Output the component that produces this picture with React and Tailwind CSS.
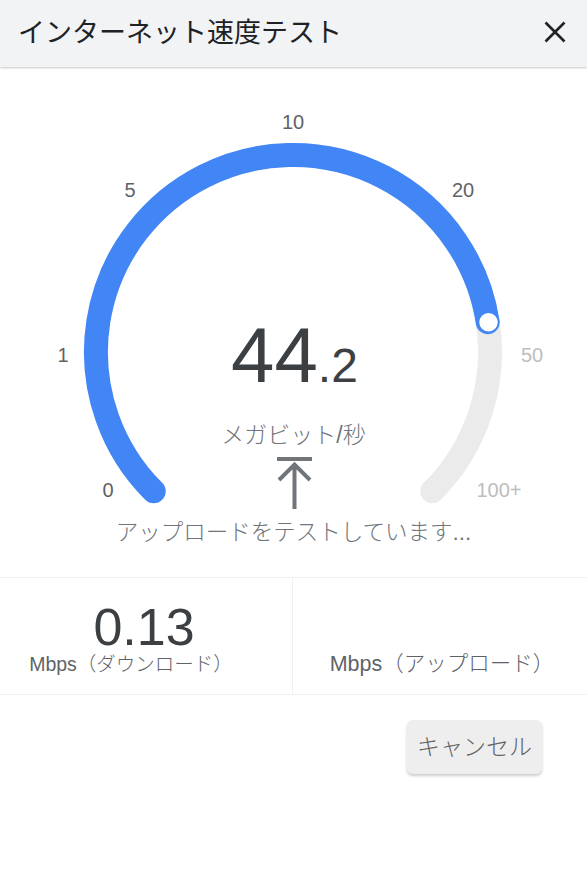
import React from "react";

function Gauge() {
  const labels = [
    { t: "0", x: 108, y: 490, c: "#5f6368" },
    { t: "1", x: 63, y: 355, c: "#5f6368" },
    { t: "5", x: 130, y: 190, c: "#5f6368" },
    { t: "10", x: 293, y: 122, c: "#5f6368" },
    { t: "20", x: 463, y: 190, c: "#5f6368" },
    { t: "50", x: 532, y: 355, c: "#bdbdbd" },
    { t: "100+", x: 499, y: 490, c: "#bdbdbd" },
  ];
  return (
    <svg
      className="absolute inset-0"
      width="587"
      height="510"
      viewBox="0 67 587 510"
    >
      <path
        d="M 487.7 322.2 A 197 197 0 0 1 432.3 491.3"
        fill="none"
        stroke="#ebebeb"
        strokeWidth="24"
        strokeLinecap="round"
      />
      <path
        d="M 153.7 491.3 A 197 197 0 1 1 487.7 322.2"
        fill="none"
        stroke="#4285f4"
        strokeWidth="24"
        strokeLinecap="round"
      />
      <circle cx="488.5" cy="322.2" r="10" fill="#ffffff" stroke="#4285f4" strokeWidth="1.5" />
      {labels.map((l) => (
        <text
          key={l.t}
          x={l.x}
          y={l.y}
          textAnchor="middle"
          dominantBaseline="central"
          fontSize="20"
          fill={l.c}
          fontFamily="'Liberation Sans', sans-serif"
        >
          {l.t}
        </text>
      ))}
    </svg>
  );
}

export default function App() {
  return (
    <div className="w-[587px] h-[873px] bg-white overflow-hidden font-['Liberation_Sans','Noto_Sans_CJK_JP',sans-serif]">
      <header className="h-[67px] bg-[#f1f3f4] flex items-center justify-between pl-[18px] pr-[20px] shadow-[0_1px_2px_rgba(0,0,0,0.22)] relative z-10">
        <h1 className="text-[27px] text-[#202124] font-normal leading-none">
          インターネット速度テスト
        </h1>
        <svg width="24" height="24" viewBox="0 0 24 24" className="mb-[4px]">
          <path d="M2.5 2.5 L21.5 21.5 M21.5 2.5 L2.5 21.5" stroke="#202124" strokeWidth="2.6" strokeLinecap="butt" />
        </svg>
      </header>

      <section className="relative h-[510px]">
        <Gauge />
        <div className="relative flex flex-col items-center pt-[249px]">
          <div className="flex items-baseline leading-none text-[#3c4043] ml-[2px]">
            <span className="text-[78px] leading-none">44</span>
            <span className="text-[48px] leading-none">.2</span>
          </div>
          <div className="mt-[27px] text-[23px] leading-[28px] text-[#70757a] font-light">メガビット/秒</div>
          <svg width="40" height="52" viewBox="0 0 40 52" className="mt-[8px]">
            <rect x="3" y="0" width="35" height="4" fill="#70757a" />
            <path d="M20.5 9 V52 M5 23 L20.5 7.5 L36 23" fill="none" stroke="#70757a" strokeWidth="4" />
          </svg>
          <div className="mt-[10px] text-[22.5px] leading-[28px] text-[#70757a] font-light">
            アップロードをテストしています...
          </div>
        </div>
      </section>

      <div className="grid grid-cols-[293px_1fr] h-[118px] border-t border-b border-[#f0f0f0]">
        <div className="flex flex-col items-center border-r border-[#f0f0f0] pt-[20px]">
          <div className="text-[52px] leading-[58px] text-[#3c4043] ml-[-4px]">0.13</div>
          <div className="-mt-[4px] text-[19.5px] leading-[24px] text-[#5f6368] mr-[30px] font-light">Mbps（ダウンロード）</div>
        </div>
        <div className="flex flex-col items-center pt-[20px]">
          <div className="h-[58px]"></div>
          <div className="-mt-[4px] text-[21.5px] leading-[24px] text-[#5f6368] ml-[4px] font-light">Mbps（アップロード）</div>
        </div>
      </div>

      <div className="flex justify-end pr-[45px] pt-[25px]">
        <button className="w-[135px] h-[54px] rounded-[6px] bg-[#eeeeee] text-[23px] text-[#616161] font-light shadow-[0_2px_3px_rgba(0,0,0,0.2)]">
          キャンセル
        </button>
      </div>
    </div>
  );
}
